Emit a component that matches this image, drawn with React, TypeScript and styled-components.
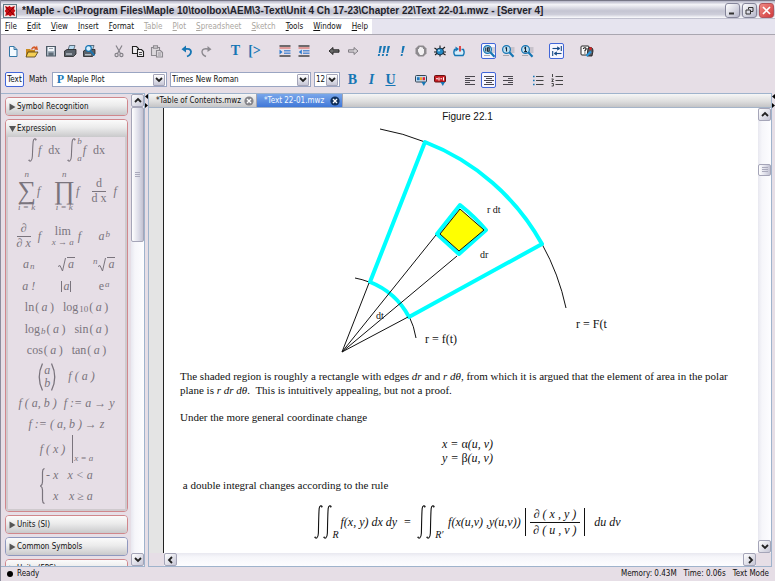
import React from "react";
import styled, { createGlobalStyle, css } from "styled-components";

const ui = `"DejaVu Sans Condensed", "DejaVu Sans", Tahoma, sans-serif`;
const serif = `"Liberation Serif", "Times New Roman", serif`;

const Global = createGlobalStyle`
  * { box-sizing: border-box; }
  html, body { margin: 0; padding: 0; height: 100%; overflow: hidden; }
  button, select, input { font: inherit; color: inherit; margin: 0; }
  svg { display: block; flex: none; }
`;

/* ---------- window frame ---------- */

const Window = styled.div`
  display: flex;
  flex-direction: column;
  height: 100vh;
  background: #e6dee6;
  border-left: 1px solid #8c8c9c;
  font: 8px/12px ${ui};
  color: #111;
`;

const TitleBar = styled.header`
  display: flex;
  align-items: center;
  flex: none;
  height: 19px;
  padding: 1px 1px 0 2px;
  border-top: 1px solid #777787;
  background: linear-gradient(#b4b4c6, #f4f4f8 20%, #c4c4d2 55%, #ceceda 75%, #f6f6fa 92%, #a4a4b8);
`;

const Title = styled.h1`
  flex: 1;
  min-width: 0;
  margin: 0 0 0 5px;
  overflow: hidden;
  white-space: nowrap;
  font: bold 10px/14px "Liberation Sans", Arial, sans-serif;
  color: #23232b;
`;

const WindowButton = styled.button<{ $close?: boolean }>`
  display: grid;
  place-items: center;
  width: 15px;
  height: 15px;
  margin-left: 2px;
  padding: 0;
  border: 1px solid ${(p) => (p.$close ? "#b3525a" : "#85859a")};
  border-radius: 3px;
  background: ${(p) =>
    p.$close ? "linear-gradient(135deg, #f08a84, #d03a3c)" : "linear-gradient(135deg, #ffffff, #b6b6ca)"};
`;

const MenuBar = styled.nav`
  display: flex;
  flex: none;
  height: 16px;
  background: #e6e4ef;
  border-bottom: 1px solid #a9a6b0;
`;

const MenuList = styled.div`
  display: flex;
  gap: 10px;
  padding: 0 4px;
  background: #fff;
`;

const MenuItem = styled.button`
  padding: 0;
  border: 0;
  background: none;
  line-height: 14px;
  &:disabled { color: #aaa6a0; }
  &::first-letter { text-decoration: underline; }
`;

/* ---------- tool bars ---------- */

const ToolRow = styled.div<{ $second?: boolean }>`
  display: flex;
  align-items: center;
  flex: none;
  height: ${(p) => (p.$second ? 27 : 31)}px;
  padding-left: ${(p) => (p.$second ? 4 : 2)}px;
`;

const ToolGroup = styled.div`
  display: flex;
  margin-right: 11px;
`;

const ToolButton = styled.button<{ $on?: boolean }>`
  display: grid;
  place-items: center;
  width: 19px;
  height: 16px;
  padding: 0;
  border: 0;
  background: none;
  ${(p) =>
    p.$on &&
    css`
      width: 15px;
      margin: 0 2px;
      border: 1px solid #4166d8;
      border-radius: 2px;
      background: #f6f6ff;
    `}
`;

const ModeButton = styled.button<{ $on?: boolean }>`
  height: 15px;
  padding: 0;
  width: ${(p) => (p.$on ? 19 : 28)}px;
  border: ${(p) => (p.$on ? "1px solid #4166d8" : "0")};
  border-radius: 2px;
  background: ${(p) => (p.$on ? "#fafaff" : "none")};
`;

const Combo = styled.label<{ $w: number }>`
  display: flex;
  align-items: center;
  width: ${(p) => p.$w}px;
  height: 15px;
  margin-right: 3px;
  padding: 1px;
  border: 1px solid #9aa5c2;
  background: #fff;
`;

const ComboSelect = styled.select`
  flex: 1;
  min-width: 0;
  height: 11px;
  padding: 0;
  border: 0;
  appearance: none;
  background: none;
  line-height: 11px;
`;

const ComboMark = styled.span`
  width: 13px;
  color: #1c7ab8;
  text-align: center;
  font: bold 12px/11px ${serif};
`;

const ComboArrow = styled.span`
  display: grid;
  place-items: center;
  width: 12px;
  height: 12px;
  border: 1px solid #a5a5b8;
  border-radius: 1px;
  background: linear-gradient(#fff, #c6c6d6);
`;

/* ---------- scroll bars ---------- */

const ScrollTrack = styled.div<{ $horizontal?: boolean }>`
  display: flex;
  flex-direction: ${(p) => (p.$horizontal ? "row" : "column")};
  flex: none;
  ${(p) => (p.$horizontal ? "height" : "width")}: 13px;
  background: ${(p) =>
    p.$horizontal
      ? "linear-gradient(#e8e8f0, #f6f6fa 30%, #fdfdff)"
      : "linear-gradient(90deg, #e8e8f0, #f6f6fa 30%, #fdfdff)"};
`;

const ScrollButton = styled.button`
  display: grid;
  place-items: center;
  flex: none;
  width: 13px;
  height: 13px;
  padding: 0;
  border: 1px solid #a5a5b8;
  border-radius: 2px;
  background: linear-gradient(135deg, #ffffff, #c6c6d6);
`;

const ScrollThumb = styled.div<{ $size: number; $offset: number }>`
  display: grid;
  place-items: center;
  height: ${(p) => p.$size}px;
  margin-top: ${(p) => p.$offset}px;
  border: 1px solid #a5a5b8;
  border-radius: 2px;
  background: linear-gradient(90deg, #fff, #dcdce8 60%, #c2c2d2);
`;

const Spacer = styled.div`
  flex: 1;
`;

/* ---------- workspace ---------- */

const Workspace = styled.main`
  display: flex;
  flex: 1;
  min-height: 0;
`;

const PaletteDock = styled.aside`
  display: flex;
  flex: none;
  width: 144px;
  border-top: 1px solid #9fb3cc;
  border-bottom: 1px solid #9fb3cc;
  border-right: 1px solid #9fb3cc;
  overflow: hidden;
`;

const PaletteList = styled.div`
  display: flex;
  flex-direction: column;
  flex: 1;
  gap: 3px;
  padding: 3px 3px 0 4px;
`;

const Palette = styled.section<{ $cool?: boolean }>`
  flex: none;
  overflow: hidden;
  border: 1px solid ${(p) => (p.$cool ? "#8f98be" : "#d0878c")};
  border-radius: 4px;
`;

const PaletteHeader = styled.button`
  display: flex;
  align-items: center;
  gap: 1px;
  width: 100%;
  height: 17px;
  padding: 0 0 0 3px;
  border: 0;
  background: linear-gradient(#fbfbfb, #ebebeb 45%, #c9c9cb);
`;

const PaletteBody = styled.div`
  padding: 0 2px 2px;
  border: 2px solid #cfcace;
  border-top: 0;
  font: italic 12px/13px ${serif};
  color: #7a747d;
`;

const KeyRow = styled.div<{ $h: number; $gap?: number }>`
  display: ${(p) => (p.$gap ? "flex" : "grid")};
  grid-template-columns: repeat(3, 1fr);
  justify-content: center;
  align-items: center;
  gap: ${(p) => p.$gap || 0}px;
  height: ${(p) => p.$h}px;
`;

const Key = styled.button`
  display: flex;
  align-items: center;
  justify-content: center;
  gap: 1px;
  padding: 0;
  border: 0;
  background: none;
  white-space: pre;
`;

/* ---------- formula parts ---------- */

const Up = styled.span`
  font-style: normal;
`;

const Small = styled.span<{ $shift?: "up" | "down" }>`
  font-size: 9px;
  line-height: 9px;
  align-self: ${(p) => (p.$shift === "up" ? "flex-start" : p.$shift === "down" ? "flex-end" : "center")};
`;

const Stack = styled.span`
  display: flex;
  flex-direction: column;
  align-items: center;
`;

const Limits = styled.span`
  display: flex;
  flex-direction: column;
  justify-content: space-between;
  height: 26px;
`;

const Bar = styled.span<{ $h: number }>`
  width: 1px;
  height: ${(p) => p.$h}px;
  background: currentColor;
`;

const Big = styled.span`
  font-style: normal;
  font-size: 26px;
  line-height: 24px;
`;

const Over = styled.span`
  padding: 0 4px 1px;
  border-bottom: 1px solid currentColor;
`;

const Radicand = styled.span`
  padding: 0 1px;
  border-top: 1px solid currentColor;
`;

const Cases = styled.span`
  display: grid;
  grid-template-columns: auto auto;
  gap: 8px 9px;
  justify-items: end;
`;

const Root = () => (
  <svg width="8" height="15" viewBox="0 0 8 15" fill="none" stroke="currentColor">
    <path d="M0 9.5 2 8.5 4.5 14 7.5 1" strokeWidth="1" />
  </svg>
);

const Integral = ({ h = 24 }: { h?: number }) => (
  <svg width="9" height={h} viewBox={`0 0 9 ${h}`} fill="none" stroke="currentColor">
    <path
      d={`M8.3 2 C7.6 .4 5.6 .2 5.2 3.4 C4.8 7 4.6 ${h / 2} 4.4 ${h - 6} C4.2 ${h - 0.6} 1.8 ${h + 0.2} .7 ${h - 2}`}
      strokeWidth="1.1"
    />
    <circle cx="7.7" cy="2" r=".6" fill="currentColor" stroke="none" />
    <circle cx="1.2" cy={h - 2} r=".6" fill="currentColor" stroke="none" />
  </svg>
);

const Brace = () => (
  <svg width="5" height="36" viewBox="0 0 5 36" fill="none" stroke="currentColor">
    <path d="M4.5 .5 Q2.5 1 2.5 4 V14 Q2.5 17 .5 18 Q2.5 19 2.5 22 V32 Q2.5 35 4.5 35.5" strokeWidth="1.2" />
  </svg>
);

const Paren = ({ flip }: { flip?: boolean }) => (
  <svg width="5" height="28" viewBox="0 0 5 28" fill="none" stroke="currentColor">
    <path d={flip ? "M.5 .5 Q7 14 .5 27.5" : "M4.5 .5 Q-2 14 4.5 27.5"} strokeWidth="1.3" />
  </svg>
);

/* ---------- document ---------- */

const Splitter = styled.div`
  display: flex;
  flex-direction: column;
  gap: 4px;
  flex: none;
  width: 3px;
  padding-top: 1px;
`;

const DocumentPane = styled.div`
  display: flex;
  flex-direction: column;
  flex: 1;
  min-width: 0;
  border: 1px solid #9fb3cc;
`;

const TabStrip = styled.div`
  display: flex;
  flex: none;
  height: 14px;
  border-bottom: 1px solid #a5b4c8;
  background: linear-gradient(#f6f6f6, #dcdcdc 60%, #c4c4c6);
`;

const Tab = styled.button<{ $active?: boolean }>`
  display: flex;
  align-items: center;
  justify-content: space-between;
  width: ${(p) => (p.$active ? 86 : 108)}px;
  padding: 0 2px 0 7px;
  border: 0;
  border-right: 1px solid #a5a5b0;
  white-space: nowrap;
  color: ${(p) => (p.$active ? "#f4f9ff" : "#111")};
  background: ${(p) => (p.$active ? "linear-gradient(#7aa6ea, #3f78d8)" : "none")};
`;

const DocRow = styled.div`
  display: flex;
  flex: 1;
  min-height: 0;
`;

const Gutter = styled.div`
  flex: none;
  width: 15px;
  border-right: 1px solid #222;
  background: #e4e4e4;
`;

const Page = styled.article`
  flex: 1;
  min-width: 0;
  overflow: hidden;
  padding: 3px 3px 0 16px;
  background: #fff;
  font: 12px/14px ${serif};
  color: #111;
`;

const Corner = styled.div`
  flex: none;
  width: 15px;
  background: #e6dee6;
`;

const Figure = styled.figure`
  display: flex;
  flex-direction: column;
  align-items: center;
  margin: 0;
`;

const Caption = styled.figcaption`
  height: 12px;
  font: 10px/12px "Liberation Sans", Arial, sans-serif;
`;

const Paragraph = styled.p`
  margin: 0 0 13px;
  padding-right: 12px;
  font-size: 11px;
`;

const Equations = styled.div`
  display: flex;
  flex-direction: column;
  align-items: center;
  margin: 0 0 13px;
  font-style: italic;
`;

const Rule = styled.div`
  display: flex;
  align-items: center;
  justify-content: center;
  margin-top: 6px;
  font-style: italic;
  white-space: pre;
`;

const Jacobian = styled.span`
  display: flex;
  align-items: center;
  gap: 4px;
  margin: 0 9px 0 4px;
`;

const DoubleSign = styled.span`
  display: flex;
  align-items: flex-end;
`;

const Domain = styled.span`
  padding: 0 2px 0 0;
  font-size: 10px;
  line-height: 9px;
`;

const StatusBar = styled.footer`
  display: flex;
  align-items: center;
  flex: none;
  gap: 7px;
  height: 14px;
  padding: 0 6px;
`;

const Dot = styled.span`
  width: 6px;
  height: 6px;
  border-radius: 50%;
  background: #000;
  margin-right: -3px;
`;

/* ---------- glyphs ---------- */

const Chevron = ({ dir = "down" }: { dir?: "up" | "down" | "left" | "right" }) => {
  const d = { up: "M1 5 4 2 7 5", down: "M1 2 4 5 7 2", left: "M5 1 2 4 5 7", right: "M3 1 6 4 3 7" }[dir];
  return (
    <svg width="8" height="8" viewBox="0 0 8 8" fill="none" stroke="#222" strokeWidth="1.8">
      <path d={d} />
    </svg>
  );
};

const Triangle = ({ open }: { open?: boolean }) => (
  <svg width="7" height="8" viewBox="0 0 7 8" fill="#555">
    <path d={open ? "M0 1 H7 L3.5 7 Z" : "M.5 .5 6.5 4 .5 7.5 Z"} />
  </svg>
);

const SplitArrows = () => (
  <>
    <svg width="3" height="5" viewBox="0 0 3 5"><path d="M3 0 V5 L0 2.5 Z" /></svg>
    <svg width="3" height="5" viewBox="0 0 3 5"><path d="M0 0 V5 L3 2.5 Z" /></svg>
  </>
);

const CloseDot = ({ dark }: { dark?: boolean }) => (
  <svg width="10" height="10" viewBox="0 0 10 10">
    <circle cx="5" cy="5" r="4.6" fill={dark ? "#10305c" : "#85858a"} />
    <path d="M3 3 7 7 M7 3 3 7" stroke="#fff" strokeWidth="1.4" />
  </svg>
);

const Logo = () => (
  <svg width="14" height="14" viewBox="0 0 14 14">
    <rect x=".5" y=".5" width="13" height="13" fill="#f3e9e9" stroke="#5e7884" />
    <path
      d="M2 2 5 3 6.5 1.8 8 3.2 11.8 2 11 5 12.4 6.8 11 8.4 12.2 12 9 11 7.2 12.4 5.4 11 2.2 12 3 8.8 1.6 7 3 5.2 Z"
      fill="#c40c12"
    />
    <path d="M3 3 11 11 M11 3 4 10" stroke="#7c0006" strokeWidth=".8" />
  </svg>
);

const blue = "#1676b4";

const art: Record<string, React.ReactNode> = {
  New: <path d="M3.5 2.5 H8 L11 5.5 V12.5 H3.5 Z M8 2.5 V5.5 H11" fill="#f4faff" stroke="#3579a8" />,
  Open: (
    <>
      <path d="M1 5 H5 L6 6 H10 V12 H1 Z" fill="#c98a1c" />
      <path d="M3 8 H13 L10 13 H1 Z" fill="#f5cf55" stroke="#4a3a14" strokeWidth=".8" />
      <path d="M6 5 Q8 1 11 3 L12 1.5 13 6 9 5.5 10 4.5 Q8 3.5 7 6 Z" fill="#d55a28" />
    </>
  ),
  Save: (
    <>
      <rect x="2.5" y="2.5" width="9" height="9.5" fill="#aab6c2" stroke="#4d5a66" />
      <rect x="4" y="3" width="6" height="4" fill="#f2f6fa" />
      <rect x="4.5" y="8.5" width="5" height="3.5" fill="#5f6c78" />
      <path d="M5 4.5 H9" stroke="#7c8894" strokeWidth=".8" />
    </>
  ),
  Print: (
    <>
      <path d="M5 6 6.5 1.5 H12 L10.5 6 Z" fill="#b9dcf2" stroke="#456" strokeWidth=".8" />
      <path d="M1.5 7 4 5.5 H13 V10 L10.5 12.5 H1.5 Z" fill="#59616a" stroke="#222" strokeWidth=".8" />
      <path d="M3 10 H9" stroke="#dfe6ec" />
    </>
  ),
  "Print preview": (
    <>
      <path d="M5 6 6.5 1.5 H12 L10.5 6 Z" fill="#b9dcf2" stroke="#456" strokeWidth=".8" />
      <path d="M1.5 7 4 5.5 H13 V10 L10.5 12.5 H1.5 Z" fill="#59616a" stroke="#222" strokeWidth=".8" />
      <path d="M3 10.8 H9" stroke="#dfe6ec" />
      <circle cx="6.5" cy="4.5" r="2.8" fill="#d8f0ff" stroke={blue} strokeWidth="1.2" />
      <path d="M8.5 7 12.5 11.5" stroke={blue} strokeWidth="1.8" />
    </>
  ),
  Cut: (
    <g fill="none" stroke="#858289" strokeWidth="1.2">
      <path d="M4 1.5 8.5 9.5 M10 1.5 5.5 9.5" />
      <circle cx="4.6" cy="11" r="1.6" />
      <circle cx="9.4" cy="11" r="1.6" />
    </g>
  ),
  Copy: (
    <g fill="#f1eef1" stroke="#222" strokeWidth="1.1">
      <path d="M1.5 2.5 H5.5 L7.5 4.5 V9.5 H1.5 Z" />
      <path d="M6.5 5.5 H10.5 L12.5 7.5 V12.5 H6.5 Z" />
      <path d="M8 8.5 H11 M8 10.5 H11" strokeWidth=".8" />
    </g>
  ),
  Paste: (
    <g fill="#dcd8dc" stroke="#8c898f" strokeWidth="1.1">
      <path d="M1.5 3.5 H9.5 V11.5 H1.5 Z" />
      <rect x="3.5" y="1.8" width="4" height="2.4" />
      <path d="M6.5 6.5 H10.5 L12.5 8.5 V13 H6.5 Z" />
      <path d="M8 9 H11 M8 11 H11" strokeWidth=".8" />
    </g>
  ),
  Undo: (
    <g>
      <path d="M5 5 Q10.5 4 11 7.5 Q11 11 7 12.5" fill="none" stroke={blue} strokeWidth="1.8" />
      <path d="M1.5 5.2 6 1.5 V8.6 Z" fill={blue} />
    </g>
  ),
  Redo: (
    <g>
      <path d="M9 5 Q3.5 4 3 7.5 Q3 11 7 12.5" fill="none" stroke="#8c898f" strokeWidth="1.4" />
      <path d="M12.5 5.2 8.5 2 V8 Z" fill="#8c898f" />
    </g>
  ),
  Outdent: (
    <g>
      <path d="M1.5 2 H12.5 M1.5 12 H12.5" stroke="#444" strokeWidth="1.6" />
      <path d="M1.5 4 H12.5" stroke="#d8564c" />
      <path d="M1.5 5.5 4.5 8 1.5 10.5 Z" fill="#2b7bd0" />
      <path d="M6 6.5 H12.5 M6 8 H12.5 M6 9.5 H12.5" stroke="#4a86d0" strokeWidth=".9" />
    </g>
  ),
  Indent: (
    <g>
      <path d="M1.5 2 H12.5 M1.5 12 H12.5" stroke="#444" strokeWidth="1.6" />
      <path d="M1.5 4 H12.5" stroke="#d8564c" />
      <path d="M4.8 5.5 1.8 8 4.8 10.5 Z" fill="#2b7bd0" />
      <path d="M6 6.5 H12.5 M6 8 H12.5 M6 9.5 H12.5" stroke="#4a86d0" strokeWidth=".9" />
    </g>
  ),
  Back: <path d="M2 7 6 3.5 V5.8 H12 V8.2 H6 V10.5 Z" fill="#6b6b6b" stroke="#1c1c1c" strokeWidth=".9" />,
  Forward: <path d="M12 7 8 3.5 V5.8 H2.5 V8.2 H8 V10.5 Z" fill="#d4d0d4" stroke="#77747a" strokeWidth=".9" />,
  "Run all": (
    <path
      d="M3.6 2 H6 L4.2 9 H2.6 Z M7.6 2 H10 L8.2 9 H6.6 Z M11.6 2 H14 L12.2 9 H10.6 Z M2.2 10 H4 L3.6 12 H1.8 Z M6.2 10 H8 L7.6 12 H5.8 Z M10.2 10 H12 L11.6 12 H9.8 Z"
      fill={blue}
    />
  ),
  Run: <path d="M7.4 2 H9.8 L8 9 H6.4 Z M6 10 H7.8 L7.4 12 H5.6 Z" fill={blue} />,
  Stop: (
    <g>
      <path d="M4.5 1.5 H9.5 L12.5 4.5 V9.5 L9.5 12.5 H4.5 L1.5 9.5 V4.5 Z" fill="#8d8a8e" />
      <path d="M4 7.5 V5 H5 V3.5 H6 V3 H7.5 V3.6 H9 V5 H10 V9 L8.5 11 H6 Z" fill="#f3f1f3" />
    </g>
  ),
  Debug: (
    <g>
      <path d="M1.5 4 12.5 11 M2 11 12 3 M7 1.5 V12.5 M1 8 H13" stroke="#1a1a1a" strokeWidth="1.1" />
      <ellipse cx="7" cy="7.5" rx="3.6" ry="3.4" fill="#2489c4" stroke="#123" strokeWidth=".8" />
      <circle cx="6" cy="6.4" r="1" fill="#bfe4f8" />
    </g>
  ),
  Restart: (
    <g>
      <path d="M4 5.5 H2.5 Q1 9 3 11.5 H11 Q13 9 11.5 5.5 H9.5" fill="#d8eefa" stroke={blue} strokeWidth="1.4" />
      <path d="M3.5 2.5 7 5 3.5 7.8 Z" fill={blue} />
      <path d="M8 2 V7.5" stroke="#d22" strokeWidth="1.6" />
    </g>
  ),
};

const Lens = ({ mark }: { mark: string }) => (
  <g>
    <path d="M9 4 H13.5 M9 6 H13.5 M9 8 H13.5 M2 11.5 H8" stroke="#9a9aa2" strokeWidth=".8" />
    <circle cx="5.5" cy="5.5" r="3.9" fill="#bfe0f2" stroke={blue} strokeWidth="1.2" />
    <path d={mark} fill="none" stroke="#123" strokeWidth="1.1" />
    <path d="M8.3 8.3 12.5 12.8" stroke={blue} strokeWidth="2.2" />
  </g>
);

art["Zoom 100"] = <Lens mark="M3.8 3.6 V7.4 M5.6 3.8 H7.2 V7.2 H5.6 Z" />;
art["Zoom 150"] = <Lens mark="M5.5 3.3 V7.6 M4.5 4.3 5.5 3.3" />;
art["Zoom 200"] = <Lens mark="M4.2 4.4 5.5 3.4 V7.6 M4.2 7.6 H7" />;
art["Tab"] = (
  <g stroke="#174a86" strokeWidth="1.1" fill="#174a86">
    <path d="M2.5 4.5 H8" />
    <path d="M7.5 2.8 10 4.5 7.5 6.2 Z" strokeWidth=".6" />
    <path d="M11.3 2 V7" />
    <path d="M6 9.5 H11.5" />
    <path d="M6.5 7.8 4 9.5 6.5 11.2 Z" strokeWidth=".6" />
    <path d="M2.7 7 V12" />
  </g>
);
art["Help"] = (
  <g>
    <rect x="1" y="2" width="8" height="9" rx="1" fill="#fff" stroke="#222" />
    <path d="M3.3 5 Q3.5 3.6 5 3.7 Q6.6 4 6 5.4 L4.9 6.6 V7.6 M4.9 8.6 V9.6" fill="none" stroke="#111" strokeWidth="1.1" />
    <path d="M8 4 Q13 2 13 7 L12 12 H7 Z" fill="#5a5a62" stroke="#111" strokeWidth=".8" />
    <path d="M6.5 12 11 7.5" stroke="#2a9ae0" strokeWidth="2.2" />
    <circle cx="10.5" cy="4.6" r="1.3" fill="#d22" />
  </g>
);
art["Text color"] = (
  <g>
    <rect x="1.5" y="2.5" width="11" height="6.5" rx="1" fill="#c3dcf0" stroke="#345" />
    <rect x="3" y="4.2" width="2.6" height="3" fill="#27b" />
    <rect x="6" y="4.2" width="2" height="3" fill="#eda52c" />
    <rect x="8.6" y="4.2" width="2.4" height="3" fill="#d23" />
    <path d="M7.5 9 H12 L9.8 13 Z" fill={blue} />
  </g>
);
art["Highlight"] = (
  <g>
    <rect x="1.5" y="2.5" width="11" height="6.5" rx="1" fill="#c81e24" stroke="#611" />
    <path d="M3 5.8 H5 M6 4.5 V7.5 M7.5 5.8 H9 M10.5 4.2 V7.6" stroke="#fff" strokeWidth="1.1" />
    <path d="M7.5 9 H12 L9.8 13 Z" fill={blue} />
  </g>
);
const lines = "#4a474e";
art["Align left"] = <path d="M2 3.5 H12 M2 5.5 H7 M2 7.5 H12 M2 9.5 H7 M2 11.5 H12" stroke={lines} />;
art["Align center"] = <path d="M2 3.5 H12 M4 5.5 H10 M2 7.5 H12 M4 9.5 H10 M2 11.5 H12" stroke={lines} />;
art["Align right"] = <path d="M2 3.5 H12 M7 5.5 H12 M2 7.5 H12 M7 9.5 H12 M2 11.5 H12" stroke={lines} />;
art["Bullets"] = (
  <g>
    <path d="M5 3.5 H12.5 M5 7.5 H12.5 M5 11.5 H12.5" stroke="#444" />
    <path d="M2 3.5 H3.6 M2 7.5 H3.6 M2 11.5 H3.6" stroke={blue} strokeWidth="1.6" />
  </g>
);
art["Numbering"] = (
  <g>
    <path d="M5.5 3.5 H13 M5.5 7.5 H13 M5.5 11.5 H13" stroke="#444" />
    <path d="M2.5 1 V4 M1.5 6 H3.4 L1.8 8.5 H3.6 M1.6 10.5 H3.4 V13 H1.6" fill="none" stroke="#333" strokeWidth=".9" />
  </g>
);

const Glyph = styled.span<{ $kind?: "italic" | "underline" }>`
  color: ${blue};
  font: bold 14px/14px ${serif};
  font-style: ${(p) => (p.$kind === "italic" ? "italic" : "normal")};
  text-decoration: ${(p) => (p.$kind === "underline" ? "underline" : "none")};
`;

const Tool = ({ name, on, children }: { name: string; on?: boolean; children?: React.ReactNode }) => (
  <ToolButton aria-label={name} title={name} $on={on} aria-pressed={on}>
    {children || (
      <svg width="14" height="14" viewBox="0 0 14 14">
        {art[name]}
      </svg>
    )}
  </ToolButton>
);

const Dropdown = ({ label, value, width, mark }: { label: string; value: string; width: number; mark?: string }) => (
  <Combo $w={width}>
    {mark && <ComboMark aria-hidden>{mark}</ComboMark>}
    <ComboSelect aria-label={label} defaultValue={value}>
      <option>{value}</option>
    </ComboSelect>
    <ComboArrow>
      <Chevron />
    </ComboArrow>
  </Combo>
);

/* ---------- palettes ---------- */

const Fn = ({ name, sub }: { name: string; sub?: React.ReactNode }) => (
  <Key>
    <Up>{name}</Up>
    {sub && <Small $shift="down">{sub}</Small>}
    <span><Up>{"(\u2009"}</Up>a<Up>{"\u2009)"}</Up></span>
  </Key>
);

const Expressions = () => (
  <PaletteBody>
    <KeyRow $h={26} $gap={7}>
      <Key><Integral />f  <Up>dx</Up></Key>
      <Key>
        <Integral />
        <Limits><Small>b</Small><Small>a</Small></Limits>
        f  <Up>dx</Up>
      </Key>
    </KeyRow>
    <KeyRow $h={56}>
      <Key>
        <Stack><Small>n</Small><Big>∑</Big><Small>i = k</Small></Stack>f
      </Key>
      <Key>
        <Stack><Small>n</Small><Big>∏</Big><Small>i = k</Small></Stack>f
      </Key>
      <Key>
        <Stack><Over><Up>d</Up></Over><Up>d x</Up></Stack>  f
      </Key>
    </KeyRow>
    <KeyRow $h={34}>
      <Key><Stack><Over>∂</Over><span>∂ x</span></Stack>  f</Key>
      <Key><Stack><Up>lim</Up><Small>x → a</Small></Stack> f</Key>
      <Key><span>a</span><Small $shift="up">b</Small></Key>
    </KeyRow>
    <KeyRow $h={22}>
      <Key>a<Small $shift="down">n</Small></Key>
      <Key><Root /><Radicand>a</Radicand></Key>
      <Key><Small $shift="up">n</Small><Root /><Radicand>a</Radicand></Key>
    </KeyRow>
    <KeyRow $h={22}>
      <Key>a !</Key>
      <Key><Bar $h={11} />a<Bar $h={11} /></Key>
      <Key><Up>e</Up> <Small $shift="up">a</Small></Key>
    </KeyRow>
    <KeyRow $h={21} $gap={9}>
      <Fn name="ln" /><Fn name="log" sub={<Up>10</Up>} />
    </KeyRow>
    <KeyRow $h={22} $gap={9}>
      <Fn name="log" sub="b" /><Fn name="sin" />
    </KeyRow>
    <KeyRow $h={21} $gap={9}>
      <Fn name="cos" /><Fn name="tan" />
    </KeyRow>
    <KeyRow $h={31} $gap={12}>
      <Key><Paren />  <Stack><span>a</span><span>b</span></Stack>  <Paren flip /></Key>
      <Key>f ( a )</Key>
    </KeyRow>
    <KeyRow $h={22} $gap={7}>
      <Key>f ( a, b )</Key>
      <Key>f := a → y</Key>
    </KeyRow>
    <KeyRow $h={20} $gap={7}>
      <Key>f := ( a, b ) → z</Key>
    </KeyRow>
    <KeyRow $h={30} $gap={7}>
      <Key>f ( x )  <Bar $h={28} />  <Small $shift="down">x = a</Small></Key>
    </KeyRow>
    <KeyRow $h={43} $gap={7}>
      <Key>
        <Brace />{"  "}
        <Cases><span>- x</span><span>x &lt; a</span><span>x</span><span>x ≥ a</span></Cases>
      </Key>
    </KeyRow>
  </PaletteBody>
);

const PaletteItem = ({ title, cool, children }: { title: string; cool?: boolean; children?: React.ReactNode }) => (
  <Palette $cool={cool}>
    <PaletteHeader aria-expanded={!!children}>
      <Triangle open={!!children} />
      {title}
    </PaletteHeader>
    {children}
  </Palette>
);

/* Polar sector: centre (342,352), inner radius 76, outer radius 227. */
const Sector = () => (
  <svg width="300" height="246" viewBox="318 123 300 246" role="img" aria-label="Polar area element">
    <g fill="none" stroke="#111" strokeWidth="1">
      <path d="M380 129 A227 227 0 0 1 425 142 M542 244 A227 227 0 0 1 566 308" />
      <path d="M355 278 A76 76 0 0 1 369 282 M409 316 A76 76 0 0 1 416 338" />
    </g>
    <g fill="none" stroke="#00ffff" strokeWidth="4" strokeLinejoin="round" strokeLinecap="round">
      <path d="M425 142 A227 227 0 0 1 542 244 L409 317 A76 76 0 0 0 370 282 Z" />
      <path d="M437 234 460 205 Q475 217 486 230 L459 254 Z" />
    </g>
    <path d="M440 234 460 209 484 230 459 251 Z" fill="#ffff00" stroke="#111" strokeWidth="1" />
    <path d="M342 352 369 283 M342 352 436 235 M342 352 457 256 M342 352 408 317" stroke="#111" strokeWidth="1" />
    <g fontFamily="Liberation Serif, Times New Roman, serif" fontSize="10" fill="#111">
      <text x="487" y="213">r dt</text>
      <text x="480" y="258">dr</text>
      <text x="376" y="319">dt</text>
      <text x="425" y="343" fontSize="12">r = f(t)</text>
      <text x="576" y="328" fontSize="12">r = F(t</text>
    </g>
  </svg>
);

const menus: [string, boolean][] = [
  ["File", true], ["Edit", true], ["View", true], ["Insert", true], ["Format", true], ["Table", false],
  ["Plot", false], ["Spreadsheet", false], ["Sketch", false], ["Tools", true], ["Window", true], ["Help", true],
];

export default function App() {
  return (
    <Window>
      <Global />
      <TitleBar>
        <Logo />
        <Title>
          {"*Maple - C:\\Program Files\\Maple 10\\toolbox\\AEM\\3-Text\\Unit 4 Ch 17-23\\Chapter 22\\Text 22-01.mwz - [Server 4]"}
        </Title>
        <WindowButton aria-label="Minimize">
          <svg width="9" height="9" viewBox="0 0 9 9"><path d="M1 7.5 H6" stroke="#333" strokeWidth="2" /></svg>
        </WindowButton>
        <WindowButton aria-label="Restore">
          <svg width="9" height="9" viewBox="0 0 9 9" fill="none" stroke="#333">
            <path d="M1 4 H5.5 V8 H1 Z M3.5 3.5 V1.5 H8 V5.5 H6" />
          </svg>
        </WindowButton>
        <WindowButton aria-label="Close" $close>
          <svg width="9" height="9" viewBox="0 0 9 9"><path d="M1 1 8 8 M8 1 1 8" stroke="#fff" strokeWidth="1.7" /></svg>
        </WindowButton>
      </TitleBar>

      <MenuBar>
        <MenuList>
          {menus.map(([name, enabled]) => (
            <MenuItem key={name} disabled={!enabled}>{name}</MenuItem>
          ))}
        </MenuList>
      </MenuBar>

      <ToolRow>
        <ToolGroup>
          {["New", "Open", "Save", "Print", "Print preview"].map((n) => <Tool key={n} name={n} />)}
        </ToolGroup>
        <ToolGroup>{["Cut", "Copy", "Paste"].map((n) => <Tool key={n} name={n} />)}</ToolGroup>
        <ToolGroup><Tool name="Undo" /><Tool name="Redo" /></ToolGroup>
        <ToolGroup>
          <Tool name="Insert text"><Glyph>T</Glyph></Tool>
          <Tool name="Insert prompt"><Glyph>[&gt;</Glyph></Tool>
        </ToolGroup>
        <ToolGroup><Tool name="Outdent" /><Tool name="Indent" /></ToolGroup>
        <ToolGroup><Tool name="Back" /><Tool name="Forward" /></ToolGroup>
        <ToolGroup>{["Run all", "Run", "Stop", "Debug", "Restart"].map((n) => <Tool key={n} name={n} />)}</ToolGroup>
        <ToolGroup><Tool name="Zoom 100" on /><Tool name="Zoom 150" /><Tool name="Zoom 200" /></ToolGroup>
        <ToolGroup><Tool name="Tab" on /></ToolGroup>
        <ToolGroup><Tool name="Help" /></ToolGroup>
      </ToolRow>

      <ToolRow $second>
        <ModeButton $on>Text</ModeButton>
        <ModeButton>Math</ModeButton>
        <Dropdown label="Style" value="Maple Plot" width={115} mark="P" />
        <Dropdown label="Font" value="Times New Roman" width={141} />
        <Dropdown label="Size" value="12" width={26} />
        <ToolGroup>
          <Tool name="Bold"><Glyph>B</Glyph></Tool>
          <Tool name="Italic"><Glyph $kind="italic">I</Glyph></Tool>
          <Tool name="Underline"><Glyph $kind="underline">U</Glyph></Tool>
        </ToolGroup>
        <ToolGroup><Tool name="Text color" /><Tool name="Highlight" /></ToolGroup>
        <ToolGroup><Tool name="Align left" /><Tool name="Align center" on /><Tool name="Align right" /></ToolGroup>
        <ToolGroup><Tool name="Bullets" /><Tool name="Numbering" /></ToolGroup>
      </ToolRow>

      <Workspace>
        <PaletteDock>
          <PaletteList>
            <PaletteItem title="Symbol Recognition" />
            <PaletteItem title="Expression"><Expressions /></PaletteItem>
            <PaletteItem title="Units (SI)" />
            <PaletteItem title="Common Symbols" cool />
            <PaletteItem title="Units (FPS)" />
          </PaletteList>
          <ScrollTrack>
            <ScrollButton aria-label="Scroll palettes up"><Chevron dir="up" /></ScrollButton>
            <ScrollThumb $size={135} $offset={0}>
              <svg width="5" height="6" viewBox="0 0 5 6"><path d="M0 .5 H5 M0 2.5 H5 M0 4.5 H5" stroke="#aaaabc" /></svg>
            </ScrollThumb>
            <Spacer />
            <ScrollButton aria-label="Scroll palettes down"><Chevron /></ScrollButton>
          </ScrollTrack>
        </PaletteDock>
        <Splitter><SplitArrows /></Splitter>
        <DocumentPane>
          <TabStrip>
            <Tab>*Table of Contents.mwz<CloseDot /></Tab>
            <Tab $active>*Text 22-01.mwz<CloseDot dark /></Tab>
          </TabStrip>
          <DocRow>
            <Gutter />
            <Page>
              <Figure>
                <Caption>Figure 22.1</Caption>
                <Sector />
              </Figure>
              <Paragraph>
                The shaded region is roughly a rectangle with edges <i>dr</i> and <i>r dθ</i>, from which it is argued
                that the element of area in the polar plane is <i>r dr dθ</i>.&nbsp; This is intuitively appealing, but not a
                proof.
              </Paragraph>
              <Paragraph>Under the more general coordinate change</Paragraph>
              <Equations>
                <span>x = <Up>α</Up>(u, v)</span>
                <span>y = <Up>β</Up>(u, v)</span>
              </Equations>
              <Paragraph>&nbsp;a double integral changes according to the rule</Paragraph>
              <Rule>
                <DoubleSign><Integral h={34} /><Integral h={34} /><Domain>R</Domain></DoubleSign>
                f(x, y) dx dy  = {" "}
                <DoubleSign><Integral h={34} /><Integral h={34} /><Domain>R′ </Domain></DoubleSign>
                f(x(u,v) ,y(u,v))
                <Jacobian>
                  <Bar $h={28} />
                  <Stack><Over>∂ ( x , y )</Over><span>∂ ( u , v )</span></Stack>
                  <Bar $h={28} />
                </Jacobian>
                du dv
              </Rule>
            </Page>
            <ScrollTrack>
              <ScrollButton aria-label="Scroll up"><Chevron dir="up" /></ScrollButton>
              <ScrollThumb $size={12} $offset={43}>
                <svg width="6" height="6" viewBox="0 0 6 6"><path d="M0 .5 H6 M0 2.5 H6 M0 4.5 H6" stroke="#aaaabc" /></svg>
              </ScrollThumb>
              <Spacer />
              <ScrollButton aria-label="Scroll down"><Chevron /></ScrollButton>
            </ScrollTrack>
          </DocRow>
          <ScrollTrack $horizontal>
            <Corner />
            <ScrollButton aria-label="Scroll left"><Chevron dir="left" /></ScrollButton>
            <Spacer />
            <ScrollButton aria-label="Scroll right"><Chevron dir="right" /></ScrollButton>
            <Corner />
          </ScrollTrack>
        </DocumentPane>
        <Splitter><SplitArrows /></Splitter>
      </Workspace>

      <StatusBar>
        <Dot />
        <span>Ready</span>
        <Spacer />
        <span>Memory: 0.43M</span>
        <span>Time: 0.06s</span>
        <span>Text Mode</span>
      </StatusBar>
    </Window>
  );
}
